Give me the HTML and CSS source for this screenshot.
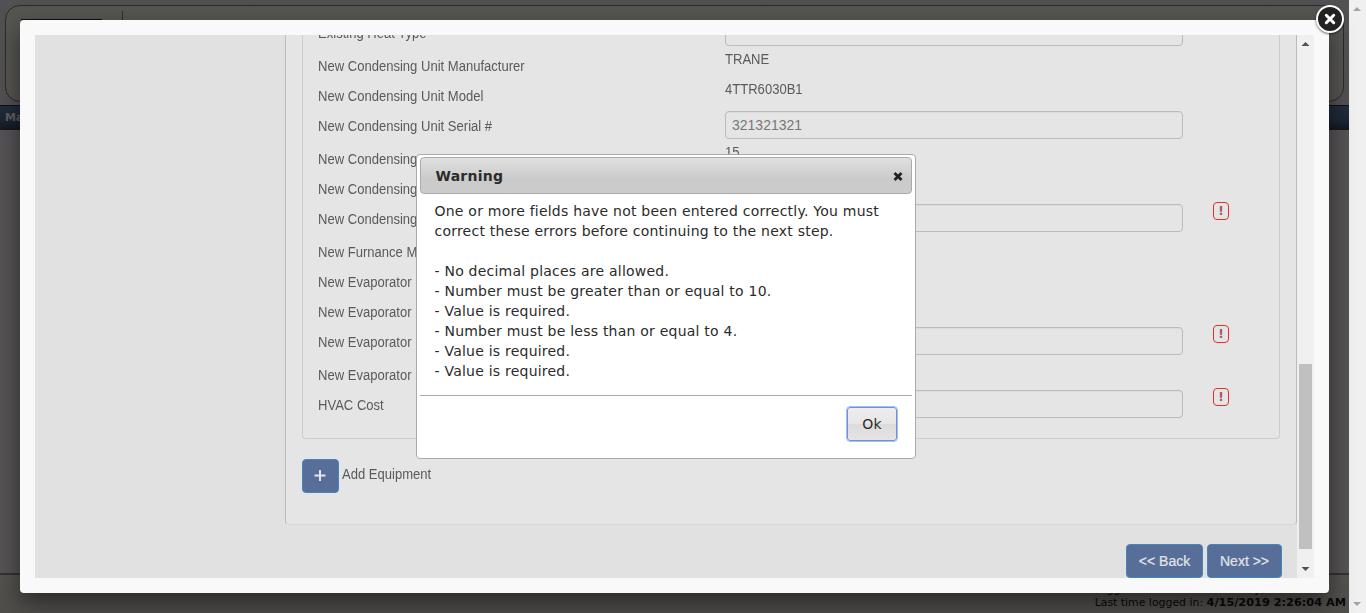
FILE: index.html
```html
<!DOCTYPE html>
<html lang="en">
<head>
<meta charset="utf-8">
<title>Warning</title>
<link rel="stylesheet" href="styles.css">
</head>
<body>
<div class="page">
  <div class="site">
    <div class="header"><span class="logo-edge"></span><span class="divider"></span></div>
    <div class="nav">Ma</div>
    <div class="site-body"></div>
    <div class="footer"><div class="logged">Logged in as: Contractor Entry,</div><div><span class="last">Last time logged in:</span> <b>4/15/2019 2:26:04 AM</b></div></div>
  </div>
  <div class="page-scroll">
    <svg width="17" height="17"><path d="M4 11h8L8 7z" fill="#a3a3a3"/></svg>
    <svg width="17" height="17"><path d="M4 6h8L8 10z" fill="#a3a3a3"/></svg>
  </div>
</div>

<div class="modal">
  <div class="frame">
    <div class="viewport">
      <div class="panel">
        <div class="fieldset">
          <div class="row tall"><label>Existing Heat Type</label><div class="input"></div></div>
          <div class="row"><label>New Condensing Unit Manufacturer</label><span class="value">TRANE</span></div>
          <div class="row"><label>New Condensing Unit Model</label><span class="value">4TTR6030B1</span></div>
          <div class="row tall"><label>New Condensing Unit Serial #</label><div class="input">321321321</div></div>
          <div class="row"><label>New Condensing</label><span class="value">15</span></div>
          <div class="row"><label>New Condensing</label></div>
          <div class="row tall"><label>New Condensing</label><div class="input"></div><span class="error">!</span></div>
          <div class="row"><label>New Furnance M</label></div>
          <div class="row"><label>New Evaporator U</label></div>
          <div class="row"><label>New Evaporator U</label></div>
          <div class="row tall"><label>New Evaporator U</label><div class="input"></div><span class="error">!</span></div>
          <div class="row"><label>New Evaporator U</label></div>
          <div class="row tall"><label>HVAC Cost</label><div class="input"></div><span class="error">!</span></div>
        </div>
        <div class="add"><span class="button plus"><svg width="13" height="13"><path d="M6 0v11M.5 5.5h11" stroke="#e2e4e8" stroke-width="2"/></svg></span><span class="add-text">Add Equipment</span></div>
      </div>
      <div class="actions"><span class="button">&lt;&lt; Back</span><span class="button next">Next &gt;&gt;</span></div>
    </div>
    <div class="scroll">
      <svg width="17" height="17"><path d="M4.500 11h8L8.500 7z" fill="#505050"/></svg>
      <div class="thumb"></div>
      <svg width="17" height="17"><path d="M4.500 6h8L8.500 10z" fill="#505050"/></svg>
    </div>
  </div>
  <svg class="close" width="36" height="36" viewBox="0 0 36 36"><circle cx="18" cy="18" r="13" fill="#222" stroke="#fff" stroke-width="2"/><path d="M14.3 14.3l7.4 7.4M21.7 14.3l-7.4 7.4" stroke="#fff" stroke-width="3" stroke-linecap="round"/></svg>
</div>

<div class="dialog">
  <div class="titlebar"><span class="title">Warning</span><svg width="10" height="10"><path d="M2.500 3l5 5M7.500 3l-5 5" stroke="#222" stroke-width="2.8" stroke-linecap="square"/></svg></div>
  <div class="message">
    <p>One or more fields have not been entered correctly. You must<br>correct these errors before continuing to the next step.</p>
    <p>- No decimal places are allowed.<br>- Number must be greater than or equal to 10.<br>- Value is required.<br>- Number must be less than or equal to 4.<br>- Value is required.<br>- Value is required.</p>
  </div>
  <div class="buttons"><span class="ok">Ok</span></div>
</div>
</body>
</html>
```
FILE: styles.css
```css
* { box-sizing: border-box; }
body { margin: 0; height: 613px; overflow: hidden; font: 14px/20px "Liberation Sans", Arial, sans-serif; color: #5a5a5a; }
.page { display: flex; height: 613px; }
.site { flex: 1; display: flex; flex-direction: column; background: linear-gradient(#515154, #535053 150px, #545153); }
.header { display: flex; gap: 20px; height: 97px; margin: 5px 5px 3px; padding: 5px 15px; border: 1px solid #2c2b2b; border-radius: 15px; background: #565552; }
.logo-edge { width: 81px; height: 1px; margin-top: 8px; background: #150c12; }
.divider { width: 1px; height: 60px; background: #2c2b2b; }
.nav { height: 25px; padding: 2px 0 0 5px; border-top: 1px solid #0d0f13; background: linear-gradient(#222d3e, #1c2635 60%, #16161a); color: #62625f; font: bold 11px/20px "DejaVu Sans", sans-serif; }
.site-body { flex: 1; background: #565355; }
.footer { height: 40px; border-top: 2px solid #353332; padding: 10px 3px 0; background: linear-gradient(#55534f, #504e4b); color: #080808; font: 10.9px/12px "DejaVu Sans", sans-serif; text-align: right; white-space: nowrap; }
.logged { width: 252px; height: 12px; margin-left: auto; text-align: left; line-height: 10px; }
.footer b { font-size: 11.3px; }
.page-scroll { width: 17px; background: #f0f0f0; display: flex; flex-direction: column; justify-content: space-between; }
.page-scroll svg { display: block; }

.modal { position: absolute; left: 20px; top: 20px; width: 1309px; height: 573px; padding: 15px; border-radius: 4px; background: #f9f9f9; box-shadow: 0 10px 25px rgba(0,0,0,.5); }
.close { position: absolute; top: -19px; right: -19px; filter: drop-shadow(0 1px 1px rgba(0,0,0,.6)); }
.frame { display: flex; height: 543px; overflow: hidden; }
.viewport { flex: 1; height: 543px; overflow: hidden; background: #e1e1e1; }
.panel { height: 490px; margin-left: 250px; padding: 0 16px; border: solid #bbb; border-width: 0 1px; border-bottom: 1px solid #d8d8d8; border-radius: 0 0 4px 4px; background: #e5e5e5; overflow: hidden; }
.fieldset { height: 424px; margin-top: -20px; padding: 0 15px; border: 1px solid #ccc; border-top: 0; border-radius: 0 0 4px 4px; }
.row { display: grid; grid-template-columns: 407px 458px 60px; height: 30px; }
.row.tall { height: 33px; }
.row label, .value, .add-text { justify-self: start; transform: scaleX(.932); transform-origin: left; white-space: nowrap; }
.row label { padding-top: 8px; }
.value { padding-top: 1px; }
.input { height: 28px; margin-top: 3px; padding: 3px 6px; border: 1px solid #bbb; border-radius: 4px; color: #777; box-shadow: inset 0 1px 1px rgba(0,0,0,.04); }
.error { justify-self: end; width: 16px; height: 18px; margin: 1px 14px 0 0; border: 1px solid #e5302e; border-radius: 4px; color: #a9555a; font: bold 12px/17px "DejaVu Sans", sans-serif; text-align: center; }
.add { display: flex; gap: 3px; margin-top: 20px; }
.add-text { padding-top: 5px; }
.button { display: grid; place-items: center; width: 77px; height: 34px; border: 1px solid #4685be; border-radius: 4px; background: #576e98; color: #e2e4e8; -webkit-text-stroke: .2px; }
.plus { width: 37px; }
.next { width: 75px; }
.actions { display: flex; justify-content: flex-end; gap: 4px; padding: 19px 15px 0 0; }
.scroll { width: 17px; background: #f0f0f0; }
.scroll svg { display: block; }
.thumb { width: 13px; height: 185px; margin: 312px 2px 12px; background: #c0c0c0; }

.dialog { position: absolute; left: 416px; top: 154px; width: 500px; height: 305px; padding: 2px 3px; border: 1px solid #aaa; border-radius: 4px; background: #fff; color: #2b2b2b; font: 14px/20px "DejaVu Sans", sans-serif; letter-spacing: .225px; }
.titlebar { display: flex; align-items: center; justify-content: space-between; height: 37px; padding: 0 8px 0 14.5px; border: 1px solid #aaa; border-radius: 4px; background: linear-gradient(#e1e1e1, #cacaca 60%, #ccc); font-weight: bold; }
.message { height: 201px; padding: 7px 14.5px; white-space: nowrap; }
.message p { margin: 0 0 20px; }
.buttons { display: flex; justify-content: flex-end; border-top: 1px solid #aaa; padding: 11px 15px; }
.ok { width: 50px; height: 34px; border: 1px solid #7190cc; border-radius: 3px; outline: 1px solid #a1c2fa; background: linear-gradient(#ededed, #e6e6e6 50%, #dcdcdc 51%, #e4e4e4); line-height: 32px; text-align: center; }
```
